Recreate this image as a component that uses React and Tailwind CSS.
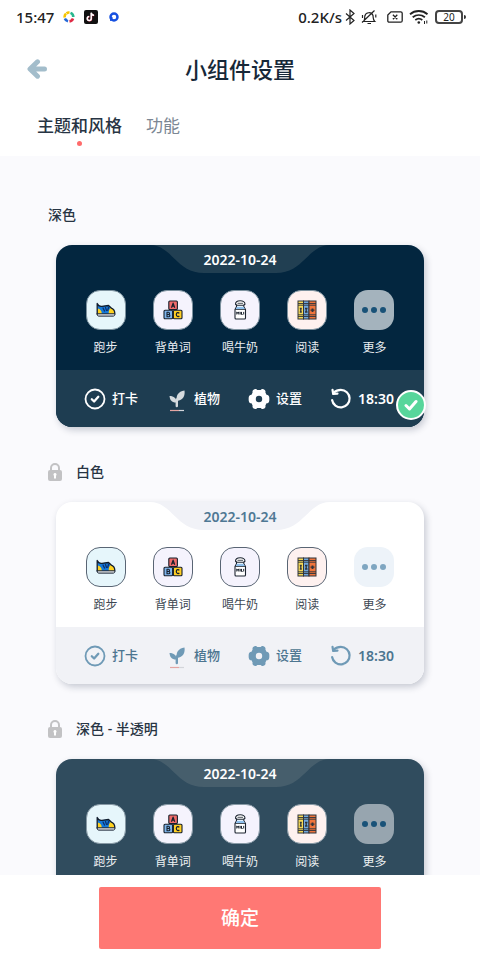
import React, { useState } from 'react';

const ShoeIcon = () => (
  <svg viewBox="0 0 20 20" className="w-5 h-5" fill="none" strokeLinejoin="round" strokeLinecap="round">
    <path d="M1.500 4.500c1 1.800 2.500 2.300 4.500 1.800l6-1 3.500 3c2.200.8 3.300 2.700 3.300 5.700H1.500z" fill="#1479d8" />
    <path d="M1.500 8.500c2.800.3 4.300 2.300 4.300 5.500H1.500zM14.500 8c2.800.5 4.300 2.500 4.300 6h-6c-.3-2.500.2-4.500 1.700-6z" fill="#ffd21f" />
    <path d="M1.200 14V3.500c1 2.500 2.500 3.200 4.800 2.800l6.500-.8 2.800 2.600c2.500.8 3.600 2.700 3.500 5.900" stroke="#111c2c" strokeWidth="1.300" />
    <path d="M7 8l1.500 3M9.500 7.500l1 3M12.500 7.500l-.8 3" stroke="#0b2e6b" strokeWidth="1.200" />
    <path d="M1.200 13.800h17.600v.7c0 1-.6 1.600-1.600 1.600H3c-1.200 0-1.800-.6-1.800-1.600z" fill="#f3f4f6" stroke="#111c2c" strokeWidth="1" />
  </svg>
);

const BlocksIcon = () => (
  <svg viewBox="0 0 20 20" className="w-5 h-5" fill="none" stroke="#17202c" strokeLinejoin="round">
    <rect x="5.800" y="1" width="8.600" height="8.600" rx="1" fill="#ef6b6b" strokeWidth="1.100" />
    <rect x="1" y="10.200" width="8.600" height="8.600" rx="1" fill="#7fb5ec" strokeWidth="1.100" />
    <rect x="10.400" y="10.200" width="8.600" height="8.600" rx="1" fill="#ffcf24" strokeWidth="1.100" />
    <path d="M8.500 7.700l1.600-4.600 1.600 4.600M9 6.200h2.200" strokeWidth="1.200" />
    <path d="M4 12.300v4.500h1.700c1.500 0 1.500-2.300 0-2.300H4h1.500c1.300 0 1.300-2.200 0-2.200z" strokeWidth="1.100" />
    <path d="M16.300 13.300c-.8-1.200-3-1-3 1.200s2.200 2.500 3 1.300" strokeWidth="1.200" />
  </svg>
);

const MilkIcon = () => (
  <svg viewBox="0 0 20 20" className="w-5 h-5" fill="none" stroke="#1c2430" strokeLinejoin="round">
    <path d="M6.500 4.500v2.300L5 9.500V18c0 .7.300 1 1 1h8.500c.7 0 1-.3 1-1V9.500l-1.700-2.700V4.500z" fill="#fff" strokeWidth="1.100" />
    <path d="M7 6.800h6.500l1.300 2.200H5.800z" fill="#8fc1ee" stroke="none" />
    <path d="M5.500 4.300C5.500 2 7.500.7 10.200.7S15 2 15 4.300l-1.500 1H7z" fill="#fff" strokeWidth="1.100" />
    <path d="M7.500 3.300h5.500M5.200 9.500h10.200" strokeWidth=".8" />
    <path d="M6.800 14.500v-2.600l1 1.500 1-1.500v2.600M10.200 11.900v2.600M11.500 11.900v2.600h1.100M13.700 11.900v2.600" strokeWidth="1" />
  </svg>
);

const BooksIcon = () => (
  <svg viewBox="0 0 20 20" className="w-5 h-5" fill="none" stroke="#30343b">
    <rect x="1" y="1" width="5.500" height="18" fill="#f6d957" />
    <rect x="6.500" y="1" width="5.500" height="18" fill="#72a9de" />
    <rect x="12" y="1" width="7" height="18" fill="#f0743b" />
    <path d="M1 3.500h18M1 5.200h18M1 16.500h18M1 14.800h18" strokeWidth=".9" />
    <path d="M2.800 8.500h2M3.800 8.500v3.500M2.800 12h2M8 8.500h2.500M9.200 8.500v3.500M8 12h2.500M13.500 10.200h4" strokeWidth="1.300" />
    <path d="M15.500 8.500v3.500" strokeWidth="1.800" />
  </svg>
);

const MoreIcon = () => (
  <svg viewBox="0 0 26 6" className="w-[26px] h-1.5" fill="currentColor">
    <circle cx="4" cy="3" r="3" />
    <circle cx="13" cy="3" r="3" />
    <circle cx="22" cy="3" r="3" />
  </svg>
);

const CheckCircleIcon = () => (
  <svg viewBox="0 0 22 22" className="w-[22px] h-[22px]" fill="none" stroke="currentColor" strokeLinecap="round" strokeLinejoin="round">
    <circle cx="11" cy="11" r="9.500" strokeWidth="1.800" />
    <path d="M7.800 11.200l2.300 2.300 4.200-4.700" strokeWidth="2.300" />
  </svg>
);

const PlantIcon = () => (
  <svg viewBox="0 0 22 22" className="w-[22px] h-[22px] overflow-visible" fill="none">
    <path d="M11 13C9.500 8 12 3.500 18.500 2.500c.8 5.500-1.500 9.500-7.500 10.500z" fill="currentColor" />
    <path d="M10.500 14.500c-4.500.3-6.500-2-7-6.500 4.500 0 7 2.300 7 6.500z" fill="currentColor" />
    <path d="M10.800 11.500V18" stroke="currentColor" strokeWidth="2.400" strokeLinecap="round" />
    <path d="M4 22.500h9" stroke="#e3a5a2" strokeWidth="1.200" />
    <path d="M13 22.500h5" stroke="#d3d5da" strokeWidth="1.200" />
  </svg>
);

const GearIcon = () => (
  <svg viewBox="0 0 22 22" className="w-[22px] h-[22px]">
    <path
      fill="currentColor"
      fillRule="evenodd"
      d="M6.500 1.200c1.300-.5 2.100-.2 2.800.8h3.400c.7-1 1.500-1.300 2.800-.8 1.700.8 2.300 1.600 1.900 3.300l1.100 2.200c1.700.2 2.500 1 2.700 2.400.2 1.500.2 2.700 0 3.800-.2 1.400-1 2.200-2.700 2.400l-1.100 2.200c.4 1.700-.2 2.500-1.900 3.300-1.300.5-2.100.2-2.800-.8H9.300c-.7 1-1.500 1.300-2.800.8-1.700-.8-2.300-1.600-1.900-3.300l-1.100-2.200C1.800 15.100 1 14.300.8 12.900c-.2-1.100-.2-2.300 0-3.800C1 7.700 1.800 6.900 3.500 6.700l1.100-2.200C4.200 2.800 4.800 2 6.500 1.200zM11 7.800a3.200 3.200 0 1 0 0 6.400 3.200 3.200 0 0 0 0-6.400z"
    />
  </svg>
);

const RefreshIcon = () => (
  <svg viewBox="0 0 22 22" className="w-[22px] h-[22px]" fill="none" stroke="currentColor" strokeLinecap="round" strokeLinejoin="round">
    <path d="M3.500 4.800C6 2.500 8 1.800 10.800 1.800a8.800 8.800 0 1 1-8.700 10.200" strokeWidth="2.200" />
    <path d="M2.500 1.800l.7 4.200 4.300-.3" strokeWidth="2.200" />
  </svg>
);

const LockIcon = () => (
  <svg viewBox="0 0 14 18" className="w-3.5 h-[18px]" fill="none">
    <path d="M3 8V5a4 4 0 0 1 8 0v3" stroke="#c2c2c4" strokeWidth="2" />
    <rect x="0" y="7" width="14" height="11" rx="2" fill="#c2c2c4" />
    <path d="M7 10a1.600 1.600 0 0 1 1 2.800V15.500H6v-2.700A1.600 1.600 0 0 1 7 10z" fill="#fff" />
  </svg>
);

const habits = [
  { name: '跑步', icon: <ShoeIcon />, bg: 'bg-[#e6f6fb]' },
  { name: '背单词', icon: <BlocksIcon />, bg: 'bg-[#f5f3fd]' },
  { name: '喝牛奶', icon: <MilkIcon />, bg: 'bg-[#f5f3fd]' },
  { name: '阅读', icon: <BooksIcon />, bg: 'bg-[#fef1ef]' },
];

const actions = [
  { name: '打卡', icon: <CheckCircleIcon />, text: 'text-[13px] font-medium' },
  { name: '植物', icon: <PlantIcon />, dim: true, text: 'text-[13px] font-medium' },
  { name: '设置', icon: <GearIcon />, text: 'text-[13px] font-medium' },
  { name: '18:30', icon: <RefreshIcon />, text: 'text-[14px] font-semibold' },
];

const themes = [
  {
    id: 'dark',
    name: '深色',
    locked: false,
    card: 'bg-[#03263f]',
    notch: 'text-[#213f52]',
    date: 'text-white',
    tile: 'border-[#7d929f]',
    more: 'bg-[#a4b3bd] text-[#195278]',
    label: 'text-[#e8edf1]',
    bar: 'bg-[#1e3d51]',
    action: 'text-white',
    icon: 'text-white',
    dimIcon: 'text-[#d5dadd]',
  },
  {
    id: 'light',
    name: '白色',
    locked: true,
    card: 'bg-white',
    notch: 'text-[#f1f2f7]',
    date: 'text-[#4f7894]',
    tile: 'border-[#596574]',
    more: 'bg-[#edf3f9] text-[#7fa6c1]',
    label: 'text-[#3d4752]',
    bar: 'bg-[#f1f2f6]',
    action: 'text-[#4c7590]',
    icon: 'text-[#6f9ab6]',
    dimIcon: 'text-[#6f9ab6]',
  },
  {
    id: 'dark-translucent',
    name: '深色 - 半透明',
    locked: true,
    card: 'bg-[#304c5e]',
    notch: 'text-[#465e6c]',
    date: 'text-white',
    tile: 'border-[#8799a5]',
    more: 'bg-[#97a5af] text-[#195278]',
    label: 'text-[#edf1f3]',
    bar: 'bg-[#1e3d51]',
    action: 'text-white',
    icon: 'text-white',
    dimIcon: 'text-[#d5dadd]',
  },
];

const StatusBar = () => (
  <div className="flex h-[34px] shrink-0 items-center justify-between pl-4 pr-3.5 text-[#222]">
    <div className="flex items-center">
      <span className="text-[15px] font-medium">15:47</span>
      <svg viewBox="0 0 12 12" className="ml-[9px] w-3 h-3" fill="none" strokeWidth="2.600">
        <path d="M1.700 6.500A4.400 4.400 0 0 1 3 2.600" stroke="#f5c400" />
        <path d="M3.500 2.300A4.400 4.400 0 0 1 6.500 1.600" stroke="#f5c400" />
        <path d="M7.500 1.900A4.400 4.400 0 0 1 10.300 6" stroke="#27b78d" />
        <path d="M10 7.500A4.400 4.400 0 0 1 6.500 10.400" stroke="#e02b45" />
        <path d="M5 10.300A4.400 4.400 0 0 1 1.900 7.500" stroke="#2368d8" />
      </svg>
      <svg viewBox="0 0 14 14" className="ml-[9px] w-3.5 h-3.5" fill="none">
        <rect width="14" height="14" rx="2" fill="#111" />
        <path d="M7.500 3v5.700a2 2 0 1 1-2-2M7.500 3c.2 1.600 1.200 2.500 2.800 2.600" stroke="#ef4060" strokeWidth="1.500" />
        <path d="M7.200 2.700v5.800a2 2 0 1 1-2-2M7.200 2.700c.2 1.600 1.200 2.500 2.800 2.600" stroke="#fff" strokeWidth="1.500" />
      </svg>
      <svg viewBox="0 0 10 10" className="ml-[11px] w-2.5 h-2.5" fill="none">
        <circle cx="5" cy="5" r="3.500" stroke="#1650e0" strokeWidth="2.500" />
        <path d="M1 9V5h2.500v3.500z" fill="#1650e0" />
      </svg>
    </div>
    <div className="flex items-center">
      <span className="text-[15px] font-medium">0.2K/s</span>
      <svg viewBox="0 0 10 16" className="ml-[3px] w-2.5 h-4" fill="none" stroke="currentColor" strokeWidth="1.200">
        <path d="M1 4.500l8 7-4 3.500V1l4 3.500-8 7" />
      </svg>
      <svg viewBox="0 0 16 16" className="ml-[6px] w-4 h-4" fill="none" stroke="currentColor" strokeWidth="1.200">
        <path d="M2.500 12.500c1.500-1.500 1-3 1.300-5.500A4.300 4.300 0 0 1 12 6.500c.3 2.700 0 4.500 1.700 6zM6.500 14.500h3.500M1 13.500L13.500 1.500M1.500 9V6M14.800 8.500V5.500" />
      </svg>
      <svg viewBox="0 0 16 12" className="ml-[10px] w-4 h-3" fill="none" stroke="currentColor" strokeWidth="1.300">
        <path d="M4 .8h9.700c1 0 1.500.5 1.500 1.500v7.400c0 1-.5 1.500-1.500 1.500H2.300c-1 0-1.500-.5-1.500-1.500V4zM5.900 3.800l4.400 4.400M10.300 3.800L5.900 8.200" />
      </svg>
      <svg viewBox="0 0 20 16" className="ml-[6px] w-5 h-4" fill="none" stroke="currentColor" strokeWidth="1.800">
        <path d="M1 5.200c5-4.300 12.500-4.300 17.500 0M3.700 8.300c3.700-3 8.500-3 12.200 0M6.300 11c2.200-1.700 4.800-1.700 7 0" />
        <circle cx="9.800" cy="13.500" r="1.300" fill="currentColor" stroke="none" />
        <path d="M15.500 12v3M17.800 11.500v3" strokeWidth="1" />
      </svg>
      <span className="ml-[6px] flex h-3.5 w-7 items-center justify-center rounded-[4px] border-2 border-[#444] text-[10px]">20</span>
      <span className="ml-px h-1 w-0.5 rounded-r bg-[#333]" />
    </div>
  </div>
);

const ThemeCard = ({ theme, selected, onSelect }) => (
  <section className="mb-[33px]">
    <h2 className="mb-[18px]">
      <label htmlFor={theme.id} className="flex h-6 items-center gap-3.5 pl-12 text-sm font-medium text-[#273443]">
        {theme.locked && <LockIcon />}
        {theme.name}
      </label>
    </h2>
    <label htmlFor={theme.id} className={`relative mx-14 block rounded-[16px] shadow-[2px_3px_7px_rgba(20,30,60,0.22)] ${theme.card}`}>
      <input id={theme.id} type="radio" name="theme" checked={selected} onChange={onSelect} className="sr-only" />
      <div className={`relative flex h-7 items-center justify-center ${theme.notch}`}>
        <svg viewBox="0 0 180 28" className="absolute top-0 h-7 w-[180px]" fill="currentColor">
          <path d="M0 0C22 0 26 28 54 28H126C154 28 158 0 180 0z" />
        </svg>
        <span className={`relative text-[14px] font-semibold ${theme.date}`}>2022-10-24</span>
      </div>
      <div className="grid grid-cols-5 px-4 pt-[17px] pb-3">
        {habits.map((habit) => (
          <div key={habit.name} className="flex flex-col items-center gap-2">
            <span className={`flex h-10 w-10 items-center justify-center rounded-[14px] border ${theme.tile} ${habit.bg}`}>{habit.icon}</span>
            <span className={`text-xs leading-5 ${theme.label}`}>{habit.name}</span>
          </div>
        ))}
        <div className="flex flex-col items-center gap-2">
          <span className={`flex h-10 w-10 items-center justify-center rounded-[14px] ${theme.more}`}>
            <MoreIcon />
          </span>
          <span className={`text-xs leading-5 ${theme.label}`}>更多</span>
        </div>
      </div>
      <div className={`grid h-[57px] grid-cols-4 items-center rounded-b-[16px] pl-7 pr-3 ${theme.bar}`}>
        {actions.map((action) => (
          <div key={action.name} className="flex items-center gap-1.5">
            <span className={action.dim ? theme.dimIcon : theme.icon}>{action.icon}</span>
            <span className={`${action.text} ${theme.action}`}>{action.name}</span>
          </div>
        ))}
      </div>
      {selected && (
        <span className="absolute -right-0.5 bottom-[7px] flex h-[30px] w-[30px] items-center justify-center rounded-full border-2 border-white bg-[#57d69b]">
          <svg viewBox="0 0 14 12" className="w-3.5 h-3" fill="none" stroke="#fff" strokeWidth="3" strokeLinecap="round" strokeLinejoin="round">
            <path d="M2 6.500L5.500 10 12 2.500" />
          </svg>
        </span>
      )}
    </label>
  </section>
);

const App = () => {
  const [tab, setTab] = useState('style');
  const [selected, setSelected] = useState('dark');

  return (
    <div className="flex h-screen flex-col bg-white font-['Noto_Sans','Noto_Sans_CJK_SC',sans-serif]">
      <StatusBar />
      <header className="grid h-[70px] shrink-0 grid-cols-[1fr_auto_1fr] items-center px-[27px]">
        <button type="button" aria-label="返回" className="w-5">
          <svg viewBox="0 0 20 20" className="w-5 h-5" fill="none" stroke="#a3bdcb" strokeWidth="5" strokeLinecap="round" strokeLinejoin="round">
            <path d="M10.500 2.800L3 10l7.500 7.200M4 10h13.500" />
          </svg>
        </button>
        <h1 className="text-[22px] font-medium text-[#172838]">小组件设置</h1>
      </header>
      <nav className="flex h-[52px] shrink-0 gap-6 px-[37px] pt-2.5">
        <button type="button" onClick={() => setTab('style')} className="flex flex-col items-center text-[17px] leading-6 font-medium text-[#273443]">
          主题和风格
          {tab === 'style' && <span className="mt-[3px] h-[5px] w-[5px] rounded-full bg-[#ff6b6b]" />}
        </button>
        <button type="button" onClick={() => setTab('feature')} className="flex flex-col items-center text-[17px] leading-6 text-[#7c8794]">
          功能
          {tab === 'feature' && <span className="mt-[3px] h-[5px] w-[5px] rounded-full bg-[#ff6b6b]" />}
        </button>
      </nav>
      <main className="min-h-0 flex-1 overflow-y-auto bg-[#fafafd] pt-[47px] [scrollbar-width:none]">
        {themes.map((theme) => (
          <ThemeCard key={theme.id} theme={theme} selected={selected === theme.id} onSelect={() => setSelected(theme.id)} />
        ))}
      </main>
      <footer className="flex shrink-0 justify-center bg-white px-[99px] pt-3 pb-[11px]">
        <button type="button" className="h-[62px] w-full rounded-[2px] bg-[#ff7874] text-[19px] font-medium text-white">
          确定
        </button>
      </footer>
    </div>
  );
};

export default App;
